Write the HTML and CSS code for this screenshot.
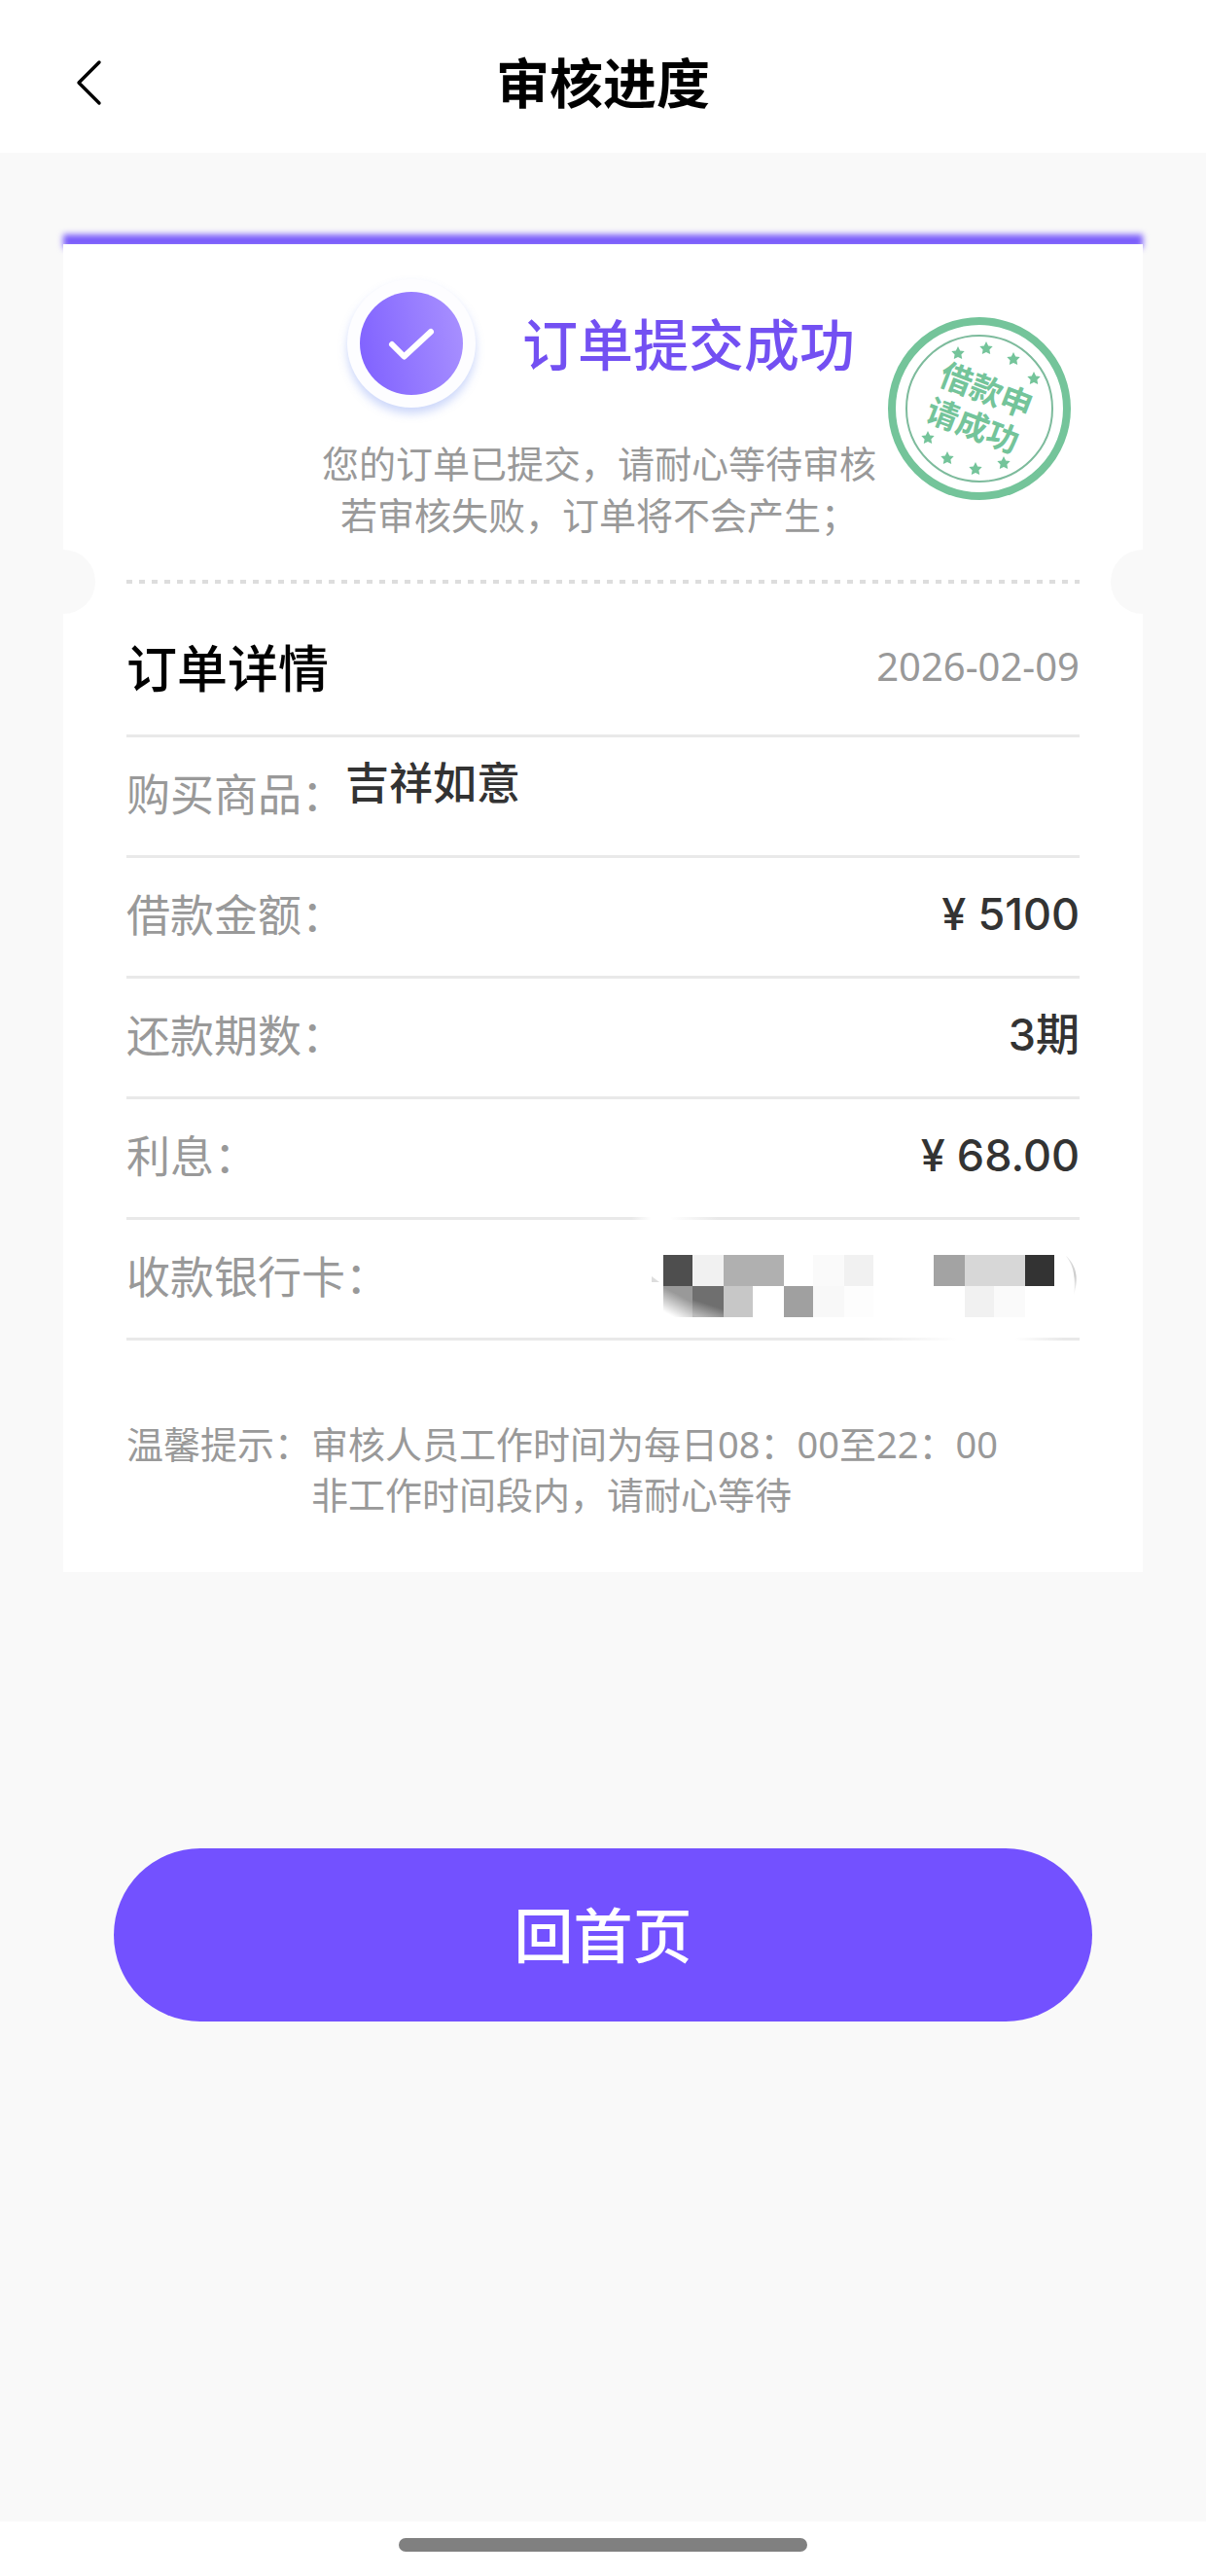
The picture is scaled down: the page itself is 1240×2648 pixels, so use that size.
FILE: index.html
```html
<!DOCTYPE html>
<html lang="zh-CN">
<head>
  <meta charset="UTF-8">
  <meta name="viewport" content="width=device-width, initial-scale=1.0">
  <title>审核进度</title>
  <link rel="stylesheet" href="styles.css">
</head>
<body>
  <header class="navbar">
    <button class="back" type="button" aria-label="返回">
      <svg width="28" height="48" viewBox="0 0 28 48">
        <path d="M25 3 L4 24 L25 45" fill="none" stroke="#000" stroke-width="3.4" stroke-linecap="round" stroke-linejoin="round"/>
      </svg>
    </button>
    <h1>审核进度</h1>
  </header>

  <main class="page">
    <div class="card-edge"></div>
    <section class="card">
      <div class="success">
        <div class="success-head">
          <div class="check">
            <svg width="106" height="106" viewBox="0 0 106 106">
              <defs>
                <linearGradient id="check-bg" x1="0" y1="0.6" x2="1" y2="0.4">
                  <stop offset="0" stop-color="#8163ff"/>
                  <stop offset="1" stop-color="#a78fff"/>
                </linearGradient>
              </defs>
              <circle cx="53" cy="53" r="53" fill="url(#check-bg)"/>
              <path d="M33 54 L45.500 66.500 L73 41" fill="none" stroke="#fff" stroke-width="6" stroke-linecap="round" stroke-linejoin="round"/>
            </svg>
          </div>
          <h2>订单提交成功</h2>
        </div>
        <p>您的订单已提交，请耐心等待审核<br>若审核失败，订单将不会产生；</p>

        <!-- 印章 -->
        <svg class="stamp" width="190" height="190" viewBox="-95 -95 190 190">
          <defs>
            <path id="star" d="M0 -7 L2.200 -2.600 L6.700 -2 L3.400 1.400 L4.200 6 L0 3.900 L-4.200 6 L-3.400 1.400 L-6.700 -2 L-2.200 -2.600 Z"/>
          </defs>
          <circle r="90" fill="none" stroke="#74c49a" stroke-width="8"/>
          <circle r="75" fill="none" stroke="#7dbb9c" stroke-width="2"/>
          <g fill="#74c49a">
            <use href="#star" x="-22" y="-57"/>
            <use href="#star" x="7" y="-62"/>
            <use href="#star" x="35" y="-51"/>
            <use href="#star" x="56" y="-31"/>
            <use href="#star" x="-53" y="30"/>
            <use href="#star" x="-33" y="51"/>
            <use href="#star" x="-4" y="62"/>
            <use href="#star" x="25" y="56"/>
          </g>
          <g class="stamp-text" transform="rotate(21)">
            <text x="0" y="-8">借款申</text>
            <text x="0" y="31">请成功</text>
          </g>
        </svg>
      </div>

      <div class="divider"></div>

      <div class="detail">
        <div class="detail-head">
          <h2>订单详情</h2>
          <time datetime="2026-02-09">2026-02-09</time>
        </div>
        <dl class="rows">
          <div class="row">
            <dt>购买商品：</dt>
            <dd class="product">吉祥如意</dd>
          </div>
          <div class="row">
            <dt>借款金额：</dt>
            <dd class="value">¥ 5100</dd>
          </div>
          <div class="row">
            <dt>还款期数：</dt>
            <dd class="value">3期</dd>
          </div>
          <div class="row fade-left">
            <dt>利息：</dt>
            <dd class="value">¥ 68.00</dd>
          </div>
          <div class="row fade-right">
            <dt>收款银行卡：</dt>
            <dd class="value">
              <!-- 银行卡号打码 -->
              <svg class="mosaic" width="441" height="116" viewBox="0 0 441 116" role="img" aria-label="银行卡号">
                <defs>
                  <linearGradient id="smudge" x1="0.200" y1="1" x2="0.550" y2="0.300">
                    <stop offset="0.100" stop-color="#fff"/>
                    <stop offset="1" stop-color="#999"/>
                  </linearGradient>
                  <linearGradient id="smudge-dark" x1="0.400" y1="1.050" x2="0.550" y2="0.600">
                    <stop offset="0" stop-color="#bbb"/>
                    <stop offset="1" stop-color="#6f6f6f"/>
                  </linearGradient>
                  <linearGradient id="arc" x1="0" y1="0" x2="0" y2="1">
                    <stop offset="0" stop-color="#e0e0e0"/>
                    <stop offset="0.500" stop-color="#ccc"/>
                    <stop offset="1" stop-color="#fff"/>
                  </linearGradient>
                </defs>
                <path d="M1 58 L1 64 L9 64 Z" fill="#ddd"/>
                <g shape-rendering="crispEdges">
                  <rect x="13" y="36" width="30" height="32" fill="#4e4e4e"/>
                  <rect x="43" y="36" width="32" height="32" fill="#f1f1f1"/>
                  <rect x="75" y="36" width="62" height="32" fill="#b0b0b0"/>
                  <rect x="167" y="36" width="32" height="32" fill="#fafafa"/>
                  <rect x="199" y="36" width="30" height="32" fill="#f1f1f1"/>
                  <rect x="13" y="68" width="30" height="32" fill="url(#smudge)"/>
                  <rect x="43" y="68" width="32" height="32" fill="url(#smudge-dark)"/>
                  <rect x="75" y="68" width="30" height="32" fill="#c7c7c7"/>
                  <rect x="137" y="68" width="30" height="32" fill="#a0a0a0"/>
                  <rect x="167" y="68" width="32" height="32" fill="#f8f8f8"/>
                  <rect x="199" y="68" width="30" height="32" fill="#fdfdfd"/>
                  <rect x="291" y="36" width="32" height="32" fill="#a3a3a3"/>
                  <rect x="323" y="36" width="62" height="32" fill="#d7d7d7"/>
                  <rect x="385" y="36" width="30" height="32" fill="#333"/>
                  <rect x="323" y="68" width="30" height="32" fill="#f1f1f1"/>
                  <rect x="353" y="68" width="32" height="32" fill="#fafafa"/>
                </g>
                <path d="M427 37 C439 48 440 62 435 78 C437 62 436 48 427 37 Z" fill="url(#arc)"/>
              </svg>
            </dd>
          </div>
        </dl>
        <div class="tips">
          <span>温馨提示：</span>
          <p>审核人员工作时间为每日08：00至22：00<br>非工作时间段内，请耐心等待</p>
        </div>
      </div>
    </section>

    <button class="home" type="button">回首页</button>
  </main>

  <footer class="gesture-bar">
    <div class="indicator"></div>
  </footer>
</body>
</html>
```
FILE: styles.css
```css
* {
  box-sizing: border-box;
  margin: 0;
  padding: 0;
}
body {
  display: flex;
  flex-direction: column;
  min-height: 100vh;
  font-family: "Noto Sans CJK SC", "Noto Sans", sans-serif;
  background-color: #f9f9f9;
  color: #333;
}
button {
  border: none;
  background: none;
  font-family: inherit;
  cursor: pointer;
}
.navbar {
  display: grid;
  grid-template-columns: 1fr auto 1fr;
  align-items: center;
  height: 157px;
  padding: 12px 77px 0;
  background-color: #fff;
}
.navbar h1 {
  padding-bottom: 6px;
  font-size: 55px;
  line-height: 80px;
  font-weight: 700;
  color: #000;
}
.back {
  justify-self: start;
  display: flex;
}
.page {
  flex: 1;
  padding: 84px 65px;
}
.card-edge {
  height: 14px;
  margin-bottom: -4px;
  background-color: #7a5cfb;
  filter: blur(3px);
}
.card {
  position: relative;
  padding-bottom: 54px;
  background-color: #fff;
}

/* 提交结果 */
.success {
  position: relative;
  padding: 36px 0 42px;
}
.success-head {
  display: flex;
  justify-content: center;
  align-items: center;
  gap: 48px;
  padding-right: 4px;
}
.success-head h2 {
  padding-bottom: 4px;
  font-size: 57px;
  line-height: 80px;
  font-weight: 500;
  color: #7350f2;
}
.check {
  display: flex;
  justify-content: center;
  align-items: center;
  width: 132px;
  height: 132px;
  border-radius: 50%;
  background-color: #fdfdff;
  box-shadow: 0 6px 10px rgba(110, 140, 240, 0.35);
}
.success p {
  margin-top: 29px;
  padding-right: 8px;
  font-size: 38px;
  line-height: 53px;
  text-align: center;
  color: #999;
}
.stamp {
  position: absolute;
  top: 74px;
  right: 73px;
}
.stamp-text {
  font-size: 33px;
  font-weight: 700;
  text-anchor: middle;
  fill: #74c49a;
}

/* 分割线和两侧缺口 */
.divider {
  position: relative;
  height: 4px;
  margin: 0 65px;
  background: repeating-linear-gradient(to right, #ddd 0, #ddd 6px, #fff 6px, #fff 13px);
}
.divider::before,
.divider::after {
  content: "";
  position: absolute;
  top: -31px;
  width: 33px;
  height: 66px;
  background-color: #f9f9f9;
}
.divider::before {
  left: -65px;
  border-radius: 0 33px 33px 0;
}
.divider::after {
  right: -65px;
  border-radius: 33px 0 0 33px;
}

/* 订单详情 */
.detail {
  padding: 0 65px;
}
.detail-head {
  display: flex;
  justify-content: space-between;
  align-items: center;
  height: 158px;
  padding-top: 13px;
  border-bottom: 3px solid #e9e9e9;
}
.detail-head h2 {
  font-size: 52px;
  font-weight: 500;
  color: #000;
}
.detail-head time {
  font-family: "Noto Sans", sans-serif;
  font-size: 40px;
  color: #999;
}
.row {
  display: flex;
  align-items: center;
  height: 124px;
  padding-bottom: 5px;
  border-bottom: 3px solid #e9e9e9;
  font-size: 45px;
  line-height: 66px;
}
.row dt {
  padding-bottom: 3px;
  color: #999;
}
.row dd {
  font-weight: 500;
}
.row .product {
  padding-bottom: 26px;
}
.row .value {
  margin-left: auto;
  font-family: Inter, "Noto Sans CJK SC", sans-serif;
}
.fade-left {
  border-image: linear-gradient(to right, #e9e9e9 53%, #fff 55%, #fff 57%, #e9e9e9 62%) 3;
}
.fade-right {
  border-image: linear-gradient(to right, #e9e9e9 77%, #fff 87%, #fff 93%, #e9e9e9 98%) 3;
}
.mosaic {
  display: block;
}
.tips {
  display: flex;
  margin-top: 80px;
  font-family: "Noto Sans", "Noto Sans CJK SC", sans-serif;
  font-size: 38px;
  line-height: 52px;
  color: #999;
}

.home {
  display: block;
  width: calc(100% - 104px);
  height: 178px;
  margin: 284px auto 0;
  padding-bottom: 6px;
  border-radius: 89px;
  background-color: #7351ff;
  color: #fff;
  font-size: 61px;
  font-weight: 500;
}
.gesture-bar {
  height: 56px;
  padding-top: 17px;
  background-color: #fff;
}
.indicator {
  width: 420px;
  height: 14px;
  margin: 0 auto;
  border-radius: 7px;
  background-color: #808080;
}
```
